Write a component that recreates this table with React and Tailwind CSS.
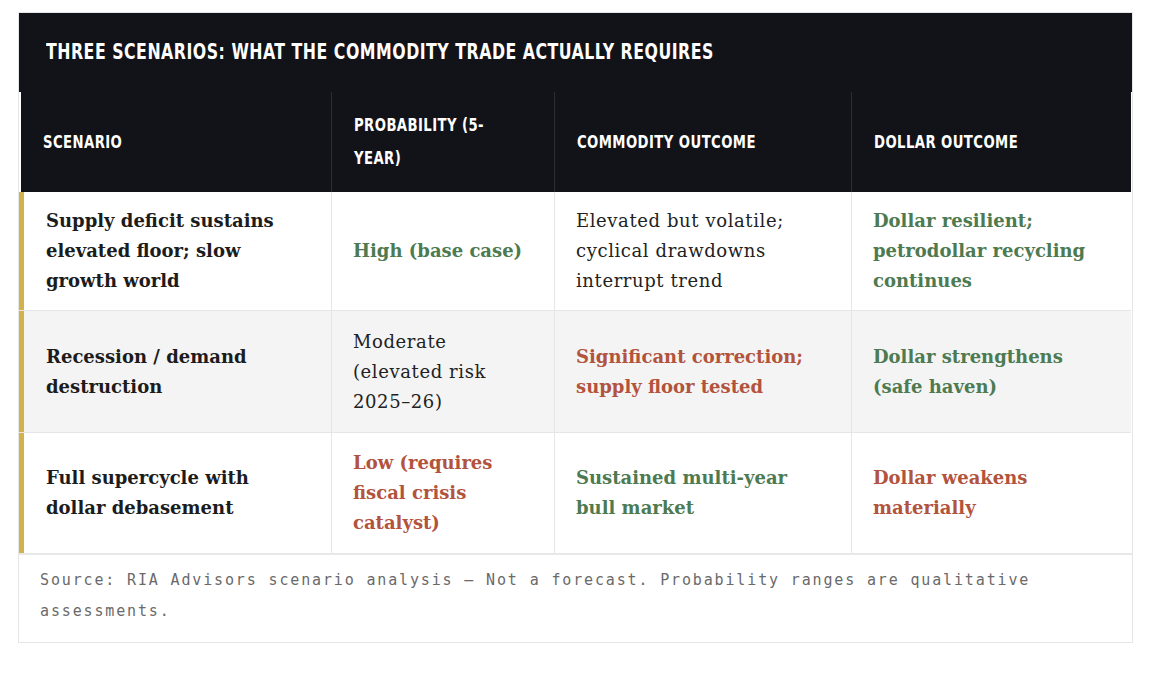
import React from 'react';

const HEAD = "font-['Liberation_Sans_Narrow','DejaVu_Sans_Condensed',sans-serif] font-bold uppercase text-white";
const SERIF = "font-['DejaVu_Serif','Liberation_Serif',serif]";

const COLUMNS = ['Scenario', 'Probability (5-year)', 'Commodity outcome', 'Dollar outcome'];

const GREEN = 'text-[#4d7a50] font-bold';
const RED = 'text-[#b2533d] font-bold';
const PLAIN = 'text-[#222222] tracking-[0.6px]';

const ROWS = [
  {
    bg: 'bg-white',
    h: 'min-h-[118px]',
    cells: [
      ['Supply deficit sustains elevated floor; slow growth world', 'text-[#1c1c1c] font-bold'],
      ['High (base case)', GREEN],
      ['Elevated but volatile; cyclical drawdowns interrupt trend', PLAIN],
      ['Dollar resilient; petrodollar recycling continues', GREEN],
    ],
  },
  {
    bg: 'bg-[#f4f4f4]',
    h: 'min-h-[121px]',
    cells: [
      ['Recession / demand destruction', 'text-[#1c1c1c] font-bold'],
      ['Moderate (elevated risk 2025–26)', PLAIN],
      ['Significant correction; supply floor tested', RED],
      ['Dollar strengthens (safe haven)', GREEN],
    ],
  },
  {
    bg: 'bg-white',
    h: 'min-h-[120px]',
    cells: [
      ['Full supercycle with dollar debasement', 'text-[#1c1c1c] font-bold'],
      ['Low (requires fiscal crisis catalyst)', RED],
      ['Sustained multi-year bull market', GREEN],
      ['Dollar weakens materially', RED],
    ],
  },
];

export default function App() {
  return (
    <div className="min-h-screen bg-white pt-3 pl-[18px]">
      <div className="w-[1115px] border border-[#e6e6e6]">
        {/* title bar */}
        <div className="flex h-[79px] items-center bg-[#111318] px-[27px]">
          <h2 className={`${HEAD} origin-left scale-x-[0.835] whitespace-nowrap text-[21px] tracking-[0.6px]`}>
            Three Scenarios: What the Commodity Trade Actually Requires
          </h2>
        </div>

        {/* header row */}
        <div className="ml-[2px] mr-[1px] grid grid-cols-[311px_223px_297px_279px] bg-[#111318]">
          {COLUMNS.map((label, i) => (
            <div
              key={label}
              className={`flex min-h-[99px] items-center px-[22px] py-[17px] ${i < 3 ? 'border-r border-[#2a2d33]' : ''}`}
            >
              <span className={`${HEAD} block origin-left scale-x-[0.84] text-[17.5px] leading-[33px] tracking-[0.5px]`}>{label}</span>
            </div>
          ))}
        </div>

        {/* body rows */}
        {ROWS.map((row, r) => (
          <div
            key={r}
            className={`mr-[1px] grid grid-cols-[313px_223px_297px_279px] ${row.bg} ${r < 2 ? 'border-b border-[#e6e6e6]' : ''}`}
          >
            {row.cells.map(([text, tone], i) => (
              <div
                key={i}
                className={`flex ${row.h} items-center py-[14px] ${i === 0 ? 'border-l-[5px] border-l-[#d3b24c] pl-[22px] pr-[20px]' : 'px-[21px]'} ${i < 3 ? 'border-r border-[#e6e6e6]' : ''}`}
              >
                <p className={`${SERIF} ${tone} text-[18px] leading-[30px]`}>{text}</p>
              </div>
            ))}
          </div>
        ))}

        {/* footnote */}
        <div className="border-t-2 border-[#e8e8e8] px-[21px] pb-[15px] pt-[10px]">
          <p className="font-['DejaVu_Sans_Mono','Liberation_Mono',monospace] text-[15px] leading-[31px] tracking-[1.85px] text-[#6a6a6a]">
            Source: RIA Advisors scenario analysis — Not a forecast. Probability ranges are qualitative assessments.
          </p>
        </div>
      </div>
    </div>
  );
}
